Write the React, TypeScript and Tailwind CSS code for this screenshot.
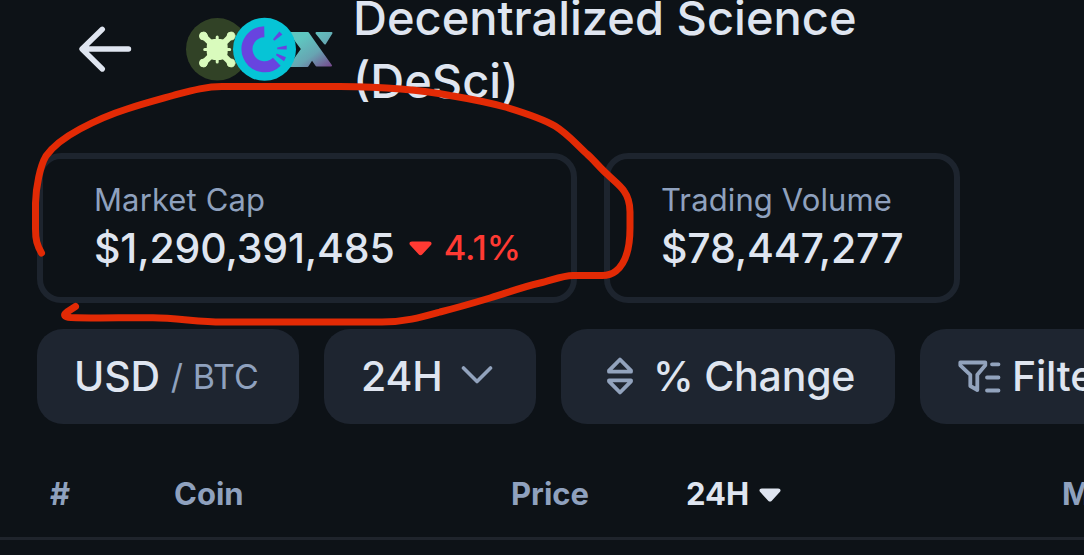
import type { ReactNode } from "react";

const HEADINGS = [
  { label: "#", className: "ml-[50px] w-[124px]" },
  { label: "Coin", className: "w-[337px]" },
  { label: "Price", className: "w-[175px]" },
];

function BackIcon() {
  return (
    <svg width="54" height="48" viewBox="0 0 54 48" fill="none" stroke="#dfe5f0" strokeWidth="5.4" strokeLinecap="round" strokeLinejoin="round">
      <path d="M24.3 4.3 4 24l20.3 20M4.5 24H50.5" />
    </svg>
  );
}

// Three overlapping coin logos
function CoinStack() {
  return (
    <svg width="148" height="64" viewBox="185 17 148 64">
      <defs>
        <linearGradient id="xFill" x1="300" y1="34" x2="326" y2="70" gradientUnits="userSpaceOnUse">
          <stop offset="0.1" stopColor="#5fc6c0" />
          <stop offset="0.55" stopColor="#67a5b2" />
          <stop offset="1" stopColor="#764a8e" />
        </linearGradient>
      </defs>
      <circle cx="217.3" cy="49.3" r="31.3" fill="#314226" />
      <g fill="#d9fbbd" stroke="#d9fbbd" strokeLinecap="round">
        <path d="M204 36.500 230.500 62.500M230.500 36.500 204 62.500" strokeWidth="6" />
        <circle cx="203.4" cy="36" r="3.900" />
        <circle cx="231" cy="36" r="3.900" />
        <circle cx="203.4" cy="63" r="3.900" />
        <circle cx="231" cy="63" r="3.900" />
        <path d="M217.200 37v25M204.700 49.500h25" strokeWidth="3" />
        <rect x="208" y="40.300" width="18.400" height="18.400" rx="6" strokeWidth="2.500" />
      </g>
      <g fill="url(#xFill)" stroke="url(#xFill)" strokeWidth="2" strokeLinejoin="round">
        <path d="M290 33h18l8 11.500L331 65.500H316.500l-4.500-6.500-4.500 7H290l12-17z" />
        <path d="M316.500 33H331.500l-6.500 10.500z" />
      </g>
      <circle cx="264.500" cy="49.300" r="31.500" fill="#06c4d6" />
      <path d="M264.300 31.700A17.500 17.500 0 1 0 276.800 61.700" fill="none" stroke="#6844df" strokeWidth="11" />
      <path d="m279.400 31.500 3 3-8 6.200-1.400-1.400zM286.700 45.400v4.200l-9.500-.4v-1.600zM284 61.200l2-3.900-9.300-3.700-.7 1.600z" fill="#6844df" />
    </svg>
  );
}

function CaretDown({ className, width }: { className: string; width: number }) {
  return (
    <svg className={className} width={width} height={(width * 15) / 23} viewBox="0 0 23 15" fill="currentColor">
      <path d="M3 .5h17c2.600 0 3.300 2.200 1.700 3.800l-8.300 9c-1.100 1.200-2.700 1.200-3.800 0l-8.300-9C-.3 2.700.4.5 3 .5z" />
    </svg>
  );
}

function ChevronIcon() {
  return (
    <svg className="-mt-[4px]" width="32" height="20" viewBox="0 0 32 20" fill="none" stroke="#92a3bd" strokeWidth="3.600" strokeLinecap="round" strokeLinejoin="round">
      <path d="m2.500 3 13.500 13.500L29.500 3" />
    </svg>
  );
}

function SortIcon() {
  return (
    <svg className="-mt-[1px]" width="28" height="38" viewBox="0 0 28 38" fill="none" stroke="#92a3bd" strokeWidth="3.800" strokeLinejoin="round">
      <path d="M14 2.500 25 13.700v1H3v-1zM14 35.500 25 24.300v-1H3v1z" />
    </svg>
  );
}

function FilterIcon() {
  return (
    <svg className="-mt-[1px]" width="43" height="33" viewBox="0 0 43 33" fill="none" stroke="#92a3bd" strokeWidth="3.800" strokeLinecap="round" strokeLinejoin="round">
      <path d="M2.300 2.500h25v2.800l-8 9.500V30l-7-4V14.800l-10-9.500zM34 4.300h6.500M29 17.500h11.500M29 30.500h11.500" />
    </svg>
  );
}

function StatCard({ label, className, children }: { label: string; className: string; children: ReactNode }) {
  return (
    <div className={`h-[150px] shrink-0 rounded-[24px] border-6 border-[#1d242e] pt-[22px] ${className}`}>
      <div className="h-[48px] text-[31px] leading-[38px] tracking-[0.12px] text-[#8fa1be]">{label}</div>
      <div className="-mt-[6px] flex h-[50px] items-center text-[41px] leading-[50px] font-medium tracking-[-0.15px]">{children}</div>
    </div>
  );
}

function Pill({ className, children }: { className: string; children: ReactNode }) {
  return (
    <button className={`flex h-[95px] shrink-0 items-center rounded-[26px] bg-[#1e2530] text-[41px] font-medium tracking-[-0.2px] ${className}`}>
      {children}
    </button>
  );
}

// Hand-drawn highlight around the market cap card
function Scribble() {
  return (
    <svg className="pointer-events-none absolute top-0 left-0" width="1084" height="555" fill="none" stroke="#e22a05" strokeWidth="7" strokeLinecap="round" strokeLinejoin="round">
      <path d="M41.500 253C37 245 35.500 240 35.500 229V203C36 187 40 166 46 156C53 146 67 136 80 129C95 121 108 115 127 109C142 104 157 100 173 95.500C190 91 205 86.500 222 86.500H340C390 87 424 90.500 450 95.500C474 99.500 491 103 507 107.500C525 113 545 120 555 126C568 134 577 145 587 154C594 160 600 168 607 174C613 180 620 185 624 191C629 198 630 204 630 212V228C630 246 626 263 616 271C611 275 607 275.500 602 275.500H573C562 275.500 550 281 540 283C522 287 507 293 490 298C470 304 456 308 440 312C422 317 405 322 382 322H222C200 322 176 318 153 317.800C125 317.500 93 318.500 71 317.500C64 317 63 315 67 312L75.500 306.500" />
    </svg>
  );
}

export default function App() {
  return (
    <div className="relative flex h-[555px] w-[1084px] flex-col overflow-hidden bg-[#0d1217] font-['Inter','Liberation_Sans',sans-serif] whitespace-nowrap text-[#dfe5f0]">
      <header className="flex h-[153px] shrink-0 items-start">
        <div className="mt-[25px] ml-[78px]"><BackIcon /></div>
        <div className="mt-[17px] ml-[53px]"><CoinStack /></div>
        <h1 className="-mt-[14px] ml-[20px] text-[47px] leading-[63px] font-medium">
          Decentralized Science
          <br />
          (DeSci)
        </h1>
      </header>

      <section className="flex shrink-0 gap-[27px] pl-[37px]">
        <StatCard label="Market Cap" className="w-[540px] pl-[51px]">
          <span>$1,290,391,485</span>
          <CaretDown className="ml-[14px] text-[#ff3a33]" width={23} />
          <span className="ml-[12px] text-[34.5px] font-medium tracking-[-0.1px] text-[#ff3a33]">4.1%</span>
        </StatCard>
        <StatCard label="Trading Volume" className="w-[356px] pl-[51px]">
          <span>$78,447,277</span>
        </StatCard>
      </section>

      <section className="mt-[26px] flex shrink-0 gap-[25px] pl-[37px]">
        <Pill className="w-[262px] pl-[37px]">
          <span>USD</span>
          <span className="ml-[11px] text-[34px] font-normal tracking-[0px] text-[#8fa1be]">/ BTC</span>
        </Pill>
        <Pill className="w-[212px] gap-[19px] pl-[37px]">
          <span>24H</span>
          <ChevronIcon />
        </Pill>
        <Pill className="w-[334px] gap-[19px] pl-[45px]">
          <SortIcon />
          <span>% Change</span>
        </Pill>
        <Pill className="w-[240px] gap-[11px] pl-[38px]">
          <FilterIcon />
          <span>Filters</span>
        </Pill>
      </section>

      <div className="mt-[50px] flex h-[66px] shrink-0 border-b-3 border-[#1f242c] text-[31px] leading-[40px] font-bold text-[#8fa1be]">
        {HEADINGS.map((h) => (
          <div key={h.label} className={`shrink-0 ${h.className}`}>{h.label}</div>
        ))}
        <div className="flex h-[40px] w-[376px] shrink-0 items-center gap-[10px] text-[#dfe5f0]">
          24H
          <CaretDown className="mt-[2px]" width={22} />
        </div>
        <div className="shrink-0">Market Cap</div>
      </div>

      <Scribble />
    </div>
  );
}
